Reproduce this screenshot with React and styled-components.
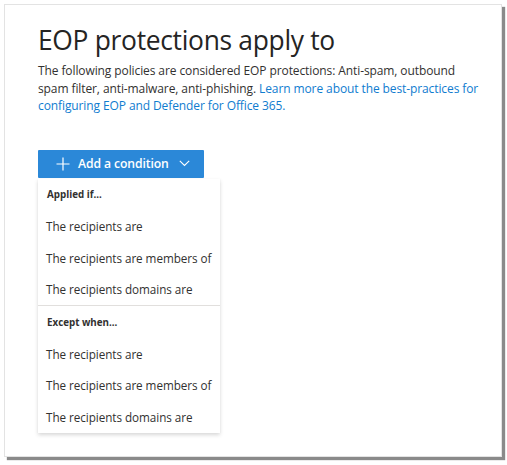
import React from "react";
import styled, { createGlobalStyle } from "styled-components";

const GlobalStyle = createGlobalStyle`
  html, body {
    margin: 0;
    padding: 0;
    background: #ffffff;
  }
  body {
    font-family: "Open Sans", "Noto Sans", sans-serif;
    color: #323130;
  }
`;

const Page = styled.div`
  padding: 4px 0 0 4px;
  width: 507px;
  height: 465px;
  box-sizing: border-box;
`;

const Card = styled.div`
  width: 498px;
  height: 453px;
  box-sizing: border-box;
  background: #fff;
  border: 1px solid #e3e3e3;
  box-shadow: 3px 3px 1px #8a8a8a;
  padding: 17px 18px 0 33px;
`;

const Title = styled.h1`
  margin: 0;
  font-size: 26.4px;
  font-weight: 400;
  line-height: 36px;
  letter-spacing: -0.3px;
  color: #252423;
`;

const Description = styled.p`
  margin: 4px 0 0;
  font-size: 12px;
  line-height: 17.5px;
  color: #323130;
  letter-spacing: -0.1px;
`;

const LearnLink = styled.a`
  color: #0f7ccf;
  text-decoration: none;
`;

const DropdownArea = styled.div`
  margin-top: 35px;
  width: 182px;
`;

const AddButton = styled.button`
  display: flex;
  align-items: center;
  gap: 8px;
  width: 166px;
  height: 28px;
  box-sizing: border-box;
  padding: 0 0 0 18px;
  border: none;
  border-radius: 1px;
  background: #2b88d8;
  color: #fff;
  font-family: inherit;
  font-size: 12.2px;
  font-weight: 600;
  letter-spacing: -0.1px;
  cursor: pointer;
`;

const Menu = styled.div`
  margin-top: 1px;
  background: #fff;
  box-shadow: 0 1.6px 4px rgba(0, 0, 0, 0.16), 0 0.3px 1px rgba(0, 0, 0, 0.1);
`;

const Section = styled.div`
  border-top: ${({ divided }) => (divided ? "1px solid #e1dfdd" : "none")};
`;

const SectionHeader = styled.div`
  height: 32px;
  display: flex;
  align-items: center;
  padding-left: 9px;
  font-size: 9.8px;
  font-weight: 700;
  color: #323130;
`;

const MenuItem = styled.div`
  height: 31.5px;
  display: flex;
  align-items: center;
  padding-left: 8px;
  font-size: 11.7px;
  color: #323130;
  letter-spacing: -0.05px;
  white-space: nowrap;
`;

const sections = [
  {
    title: "Applied if...",
    items: [
      "The recipients are",
      "The recipients are members of",
      "The recipients domains are",
    ],
  },
  {
    title: "Except when...",
    items: [
      "The recipients are",
      "The recipients are members of",
      "The recipients domains are",
    ],
  },
];

function PlusIcon() {
  return (
    <svg width="14" height="14" viewBox="0 0 14 14" fill="none">
      <path d="M7 0.5v13M0.5 7h13" stroke="#fff" strokeWidth="1.2" />
    </svg>
  );
}

function ChevronIcon() {
  return (
    <svg width="11" height="7" viewBox="0 0 11 7" fill="none" style={{ marginLeft: 2 }}>
      <path d="M0.8 0.8l4.7 4.7 4.7-4.7" stroke="#fff" strokeWidth="1.1" />
    </svg>
  );
}

export default function App() {
  return (
    <Page>
      <GlobalStyle />
      <Card>
        <Title>EOP protections apply to</Title>
        <Description>
          The following policies are considered EOP protections: Anti-spam, outbound
          spam filter, anti-malware, anti-phishing.{" "}
          <LearnLink href="#">
            Learn more about the best-practices for configuring EOP and Defender for
            Office 365.
          </LearnLink>
        </Description>
        <DropdownArea>
          <AddButton>
            <PlusIcon />
            <span>Add a condition</span>
            <ChevronIcon />
          </AddButton>
          <Menu>
            {sections.map((s, i) => (
              <Section key={s.title} divided={i > 0}>
                <SectionHeader>{s.title}</SectionHeader>
                {s.items.map((item) => (
                  <MenuItem key={item}>{item}</MenuItem>
                ))}
              </Section>
            ))}
          </Menu>
        </DropdownArea>
      </Card>
    </Page>
  );
}
